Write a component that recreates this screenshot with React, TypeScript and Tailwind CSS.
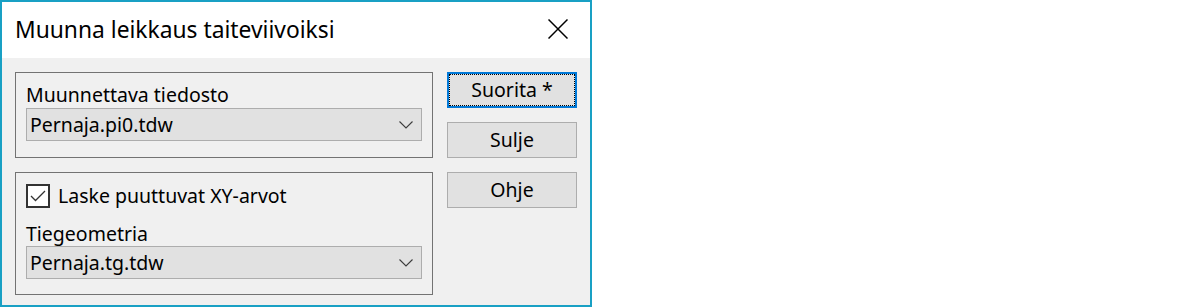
import React from "react";

const font = { fontFamily: '"Noto Sans", "Open Sans", sans-serif' };

function Chevron() {
  return (
    <svg width="14" height="8" viewBox="0 0 14 8" className="block">
      <polyline points="0.5,0.5 7,7 13.5,0.5" fill="none" stroke="#3c3c3c" strokeWidth="1.1" />
    </svg>
  );
}

function Combo({ value }: { value: string }) {
  return (
    <div className="flex h-[33px] w-[396px] items-center justify-between border border-[#adadad] bg-[#e1e1e1] pl-[3px] pr-[8px]">
      <span className="text-[19.5px] leading-[26px] text-black">{value}</span>
      <Chevron />
    </div>
  );
}

export default function App() {
  return (
    <div className="flex h-[307px] w-[1200px] bg-white" style={font}>
      <div className="flex h-[307px] w-[592px] flex-col border-2 border-[#19a0c4]">
        <div className="flex h-[56px] shrink-0 items-center justify-between bg-white pl-[13px] pr-[22px]">
          <span className="text-[22.8px] leading-[30px] text-black">Muunna leikkaus taiteviivoiksi</span>
          <svg width="20" height="20" viewBox="0 0 20 20" className="block -mt-[2px]">
            <line x1="0.5" y1="0.5" x2="19.5" y2="19.5" stroke="#000" strokeWidth="1.5" />
            <line x1="19.5" y1="0.5" x2="0.5" y2="19.5" stroke="#000" strokeWidth="1.5" />
          </svg>
        </div>
        <div className="flex flex-1 gap-[14px] bg-[#f0f0f0] pl-[13px] pt-[14px]">
          <div className="flex w-[418px] flex-col gap-[14px]">
            <div className="flex h-[86px] flex-col border border-[#737373] px-[10px] pt-[9px]">
              <div className="h-[26px] text-[19.5px] leading-[26px] text-black">Muunnettava tiedosto</div>
              <Combo value="Pernaja.pi0.tdw" />
            </div>
            <div className="flex h-[123px] flex-col border border-[#737373] px-[10px] pt-[11px]">
              <div className="flex h-[24px] items-center gap-[8px]">
                <div className="flex h-[24px] w-[24px] items-center justify-center border-2 border-[#333333] bg-white">
                  <svg width="16" height="12" viewBox="0 0 16 12" className="block">
                    <polyline points="1,6 5.5,10.5 15,1" fill="none" stroke="#333" strokeWidth="1.3" />
                  </svg>
                </div>
                <span className="text-[19.5px] leading-[26px] text-black">Laske puuttuvat XY-arvot</span>
              </div>
              <div className="mt-[13px] h-[25px] text-[19.5px] leading-[26px] text-black">Tiegeometria</div>
              <Combo value="Pernaja.tg.tdw" />
            </div>
          </div>
          <div className="flex w-[130px] flex-col gap-[14px]">
            <button className="flex h-[36px] w-[130px] items-center justify-center border-2 border-[#0078d7] bg-[#e1e1e1] text-[19.5px] leading-[26px] text-black outline-1 outline-dotted outline-black -outline-offset-3">
              Suorita *
            </button>
            <button className="flex h-[36px] w-[130px] items-center justify-center border border-[#adadad] bg-[#e1e1e1] text-[19.5px] leading-[26px] text-black">
              Sulje
            </button>
            <button className="flex h-[36px] w-[130px] items-center justify-center border border-[#adadad] bg-[#e1e1e1] text-[19.5px] leading-[26px] text-black">
              Ohje
            </button>
          </div>
        </div>
      </div>
    </div>
  );
}
